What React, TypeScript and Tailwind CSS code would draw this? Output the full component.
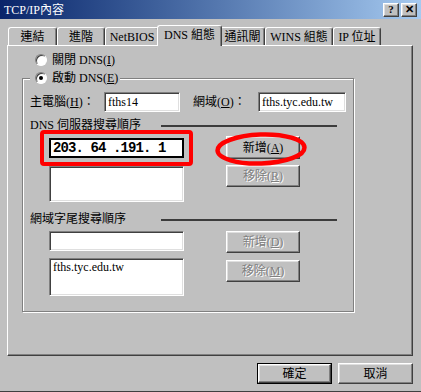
import React from 'react'

const raised =
  'border border-t-white border-l-white border-r-[#404040] border-b-[#404040] shadow-[inset_-1px_-1px_0_#808080,inset_1px_1px_0_#dfdfdf] bg-[#c0c0c0]'
const sunken =
  'border border-t-[#808080] border-l-[#808080] border-r-white border-b-white shadow-[inset_1px_1px_0_#404040,inset_-1px_-1px_0_#dfdfdf] bg-white'

function Radio({ checked }: { checked?: boolean }) {
  return (
    <span className="flex h-[12px] w-[12px] items-center justify-center rounded-full border border-t-[#808080] border-l-[#808080] border-r-white border-b-white bg-white shadow-[inset_1px_1px_0_#404040]">
      {checked && <span className="h-[4px] w-[4px] rounded-full bg-black" />}
    </span>
  )
}

function Btn({ children, disabled, w = 'w-[74px]', h = 'h-[22px]' }: { children: React.ReactNode; disabled?: boolean; w?: string; h?: string }) {
  return (
    <div
      className={`${raised} ${w} ${h} flex items-center justify-center text-[12px] ${
        disabled ? 'text-[#808080] [text-shadow:1px_1px_0_#fff]' : 'text-black'
      }`}
    >
      {children}
    </div>
  )
}

function Tab({ label, w, active }: { label: string; w: string; active?: boolean }) {
  if (active) {
    return (
      <div
        className={`${w} relative z-10 -mx-[2px] -mb-[1px] flex h-[21px] items-center justify-center rounded-t-[3px] border border-b-0 border-t-white border-l-white border-r-[#404040] bg-[#c0c0c0] pb-[2px] shadow-[inset_-1px_0_0_#808080] text-[12px]`}
      >
        {label}
      </div>
    )
  }
  return (
    <div
      className={`${w} flex h-[18px] items-center justify-center rounded-t-[3px] border border-b-0 border-t-white border-l-white border-r-[#404040] shadow-[inset_-1px_0_0_#808080] text-[12px]`}
    >
      {label}
    </div>
  )
}

function SectionLabel({ text, labelW }: { text: string; labelW: string }) {
  return (
    <div className="flex h-[13px] items-center">
      <span className={`${labelW} leading-[13px]`}>{text}</span>
      <span className="h-[2px] w-[176px] bg-[#3c3c3c]" />
    </div>
  )
}

export default function App() {
  return (
    <div className="flex h-[392px] w-[421px] flex-col overflow-hidden border-b border-[#404040] bg-[#c0c0c0] font-['Liberation_Serif','Noto_Sans_CJK_TC',serif] text-[12px] text-black">
      {/* title bar */}
      <div className="flex h-[19px] items-center bg-gradient-to-r from-[#0a246a] to-[#a6caf0] pl-[4px] pr-[4px]">
        <span className="flex-1 text-[12px] leading-[12px] text-white">TCP/IP內容</span>
        <div className={`${raised} mr-[2px] flex h-[14px] w-[16px] items-center justify-center text-[11px] font-bold leading-none`}>?</div>
        <div className={`${raised} flex h-[14px] w-[16px] items-center justify-center text-[11px] font-bold leading-none`}>✕</div>
      </div>

      {/* tabs */}
      <div className="ml-[8px] mt-[6px] flex h-[20px] items-end">
        <Tab label="連結" w="w-[49px]" />
        <Tab label="進階" w="w-[48px]" />
        <Tab label="NetBIOS" w="w-[54px]" />
        <Tab label="DNS 組態" w="w-[65px]" active />
        <Tab label="通訊閘" w="w-[45px]" />
        <Tab label="WINS 組態" w="w-[68px]" />
        <Tab label="IP 位址" w="w-[48px]" />
      </div>

      {/* panel */}
      <div className="ml-[7px] flex h-[311px] w-[406px] flex-col border border-t-white border-l-white border-r-[#404040] border-b-[#404040] shadow-[inset_-1px_-1px_0_#808080]">
        <div className="ml-[27px] mt-[7px] flex h-[13px] items-center gap-[5px]">
          <Radio />
          <span>
            關閉 DNS(<u>I</u>)
          </span>
        </div>

        <fieldset className="ml-[14px] mt-[5px] h-[241px] w-[331px] border border-[#808080] px-[7px] shadow-[1px_1px_0_#fff,inset_1px_1px_0_#fff]">
          <legend className="ml-0 flex h-[14px] items-center gap-[5px] bg-[#c0c0c0] pl-[5px] pr-[2px]">
            <Radio checked />
            <span>
              啟動 DNS(<u>E</u>)
            </span>
          </legend>

          <div className="mt-[7px] flex h-[20px] items-center">
            <span className="w-[74px]">
              主電腦(<u>H</u>)：
            </span>
            <div className={`${sunken} flex h-[20px] w-[76px] items-center pl-[3px]`}>fths14</div>
            <span className="ml-[13px] w-[65px]">
              網域(<u>O</u>)：
            </span>
            <div className={`${sunken} flex h-[20px] w-[88px] items-center pl-[3px]`}>fths.tyc.edu.tw</div>
          </div>

          <div className="mt-[7px]">
            <SectionLabel text="DNS 伺服器搜尋順序" labelW="w-[131px]" />
          </div>

          <div className="relative mt-[6px] flex items-start">
            <div className="ml-[19px] flex w-[135px] flex-col gap-[8px]">
              <div className="flex h-[20px] items-center border-2 border-black bg-white pl-[2px] font-['Liberation_Mono',monospace] text-[14px] font-bold tracking-[-0.9px]">
                203. 64 .191. 1
              </div>
              <div className={`${sunken} h-[36px]`} />
            </div>
            <div className="-mt-[2px] ml-[42px] flex flex-col gap-[6px]">
              <Btn h="h-[23px]">
                新增(<u>A</u>)
              </Btn>
              <Btn disabled>
                移除(<u>R</u>)
              </Btn>
            </div>
            {/* red annotations */}
            <div className="pointer-events-none absolute left-[10px] top-[-8px] h-[36px] w-[153px] rounded-[4px] border-[4px] border-[#ff0000]" />
            <svg className="pointer-events-none absolute left-[184px] top-[-7px]" width="94" height="36" viewBox="0 0 94 36">
              <ellipse cx="47" cy="18" rx="43.5" ry="14.5" fill="none" stroke="#ff0000" strokeWidth="4.5" transform="rotate(-2 47 18)" />
            </svg>
          </div>

          <div className="mt-[11px]">
            <SectionLabel text="網域字尾搜尋順序" labelW="w-[131px]" />
          </div>

          <div className="mt-[5px] flex items-start">
            <div className="ml-[19px] flex w-[135px] flex-col gap-[7px]">
              <div className={`${sunken} h-[20px]`} />
              <div className={`${sunken} h-[38px] pl-[3px] pt-[2px] leading-[13px]`}>fths.tyc.edu.tw</div>
            </div>
            <div className="ml-[42px] flex flex-col gap-[7px]">
              <Btn disabled>
                新增(<u>D</u>)
              </Btn>
              <Btn disabled>
                移除(<u>M</u>)
              </Btn>
            </div>
          </div>
        </fieldset>
      </div>

      {/* dialog buttons */}
      <div className="mr-[8px] mt-[7px] flex justify-end gap-[6px]">
        <div className="border border-black">
          <Btn w="w-[73px]" h="h-[19px]">確定</Btn>
        </div>
        <Btn w="w-[75px]" h="h-[21px]">取消</Btn>
      </div>
    </div>
  )
}
